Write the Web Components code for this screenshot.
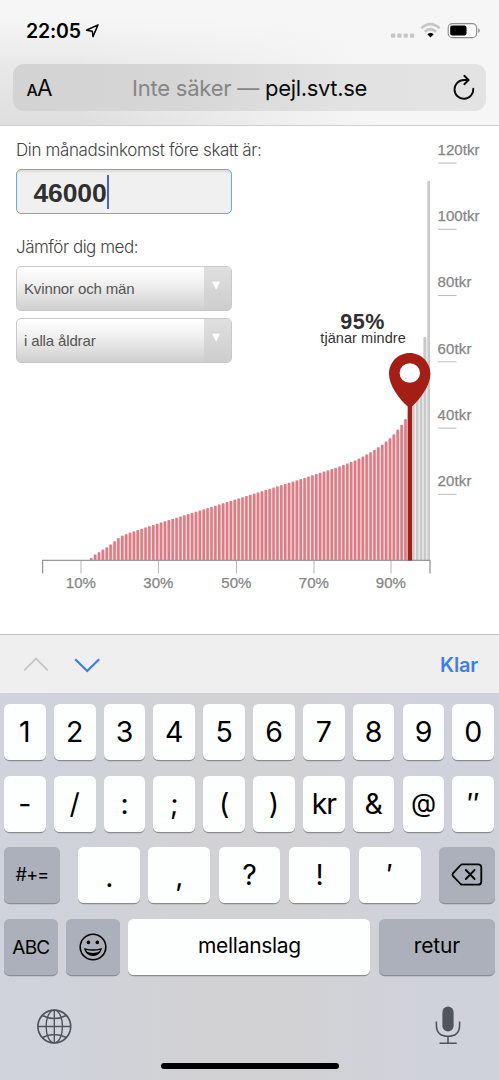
<!DOCTYPE html>
<html lang="sv">
<head>
<meta charset="utf-8">
<title>pejl.svt.se</title>
<style>
html,body{margin:0;padding:0}
body{width:499px;height:1080px;overflow:hidden;background:#fff;font-family:"Inter","Liberation Sans",sans-serif}
</style>
</head>
<body>
<phone-screen></phone-screen>
<script>
const define = (name, html, init) => {
  const t = document.createElement('template');
  t.innerHTML = html;
  customElements.define(name, class extends HTMLElement {
    connectedCallback() {
      if (this.shadowRoot) return;
      this.attachShadow({mode: 'open'}).append(t.content.cloneNode(true));
      if (init) init.call(this, this.shadowRoot);
    }
  });
};

/* Text set to a given width (w) by spreading the difference over its letters. */
define('fit-text', `<style>:host{display:inline-block;white-space:pre}span{display:inline-block;white-space:pre}</style><span><slot></slot></span>`,
function (root) {
  const span = root.querySelector('span');
  const target = parseFloat(this.getAttribute('w'));
  this.style.width = target + 'px';
  const n = this.textContent.length;
  span.style.letterSpacing = (target - span.getBoundingClientRect().width) / n + 'px';
});

define('status-bar', `<style>
:host{display:flex;box-sizing:border-box;height:64px;padding:19px 18px 0 26px;align-items:flex-start;color:#000}
fit-text{font:600 19.5px/24px Inter,sans-serif}
.loc{margin:4px 0 0 4px}
.right{margin-left:auto}
svg{display:block}
</style>
<fit-text w="55">22:05</fit-text>
<svg class="loc" width="15" height="16" viewBox="0 0 15 16"><path d="M1.4 7.3 13 1.9 8 13.6 7.3 8.2Z" fill="none" stroke="#000" stroke-width="1.5" stroke-linejoin="round"/></svg>
<svg class="right" width="92" height="24" viewBox="0 0 92 24">
<g fill="#c6c6c6"><rect x="2" y="14.5" width="4.3" height="4.3" rx="1.3"/><rect x="8.3" y="14.5" width="4.3" height="4.3" rx="1.3"/><rect x="14.6" y="14.5" width="4.3" height="4.3" rx="1.3"/><rect x="20.9" y="14.5" width="4.3" height="4.3" rx="1.3"/></g>
<g fill="none" stroke="#c6c6c6" stroke-width="2.7"><path d="M32.3 9.2Q41.5 .9 50.7 9.2"/><path d="M35.8 12.7Q41.5 7.8 47.2 12.7"/></g>
<path d="M38.3 15.3Q41.5 12.9 44.7 15.3L41.5 18.6Z"/>
<rect x="59.2" y="4.6" width="28.4" height="14" rx="4.2" fill="#fafafa" stroke="#8c8c8c" stroke-width="1.1"/>
<rect x="61.2" y="6.6" width="16.3" height="10" rx="2"/>
<path d="M89.2 9.2q1.6.7 1.6 2.4t-1.6 2.4Z" fill="#8c8c8c"/></svg>`);

define('address-bar', `<style>
:host{display:flex;box-sizing:border-box;align-items:center;height:47px;margin:0 13px;padding:0 10px 0 13.5px;border-radius:11px;background:linear-gradient(90deg,#d3d3d3,#d6d6d6 35%,#e2e2e2 70%,#e3e3e3);color:#0b0b0b}
.aa{display:flex;align-items:baseline;width:105.5px;height:30px;line-height:30px}
.s{font-size:16px;font-weight:500}.b{font-size:22.5px}
.host{font-size:22px;line-height:30px;display:flex}
.g{color:#868686}
svg{margin-left:auto;display:block}
</style>
<div class="aa"><fit-text class="s" w="10.5">A</fit-text><fit-text class="b" w="15">A</fit-text></div>
<div class="host"><fit-text class="g" w="133">Inte säker — </fit-text><fit-text w="102">pejl.svt.se</fit-text></div>
<svg width="24" height="28" viewBox="0 0 24 28"><g fill="none" stroke="#0b0b0b" stroke-width="1.9" stroke-linecap="round" stroke-linejoin="round"><path d="M21.3 14.8A9.4 9.4 0 1 1 11.9 6H16.2"/><path d="M12.3 1.8 16.6 6 12.3 10.2"/></g></svg>`);

define('browser-chrome', `<style>
:host{display:block;box-sizing:border-box;height:126px;border-bottom:1px solid #cfcfcf;background:linear-gradient(90deg,rgba(246,246,246,0) 15%,#f6f6f6 75%),linear-gradient(#f6f6f6 15%,#e9e9e9 50%,#dedede)}
</style><status-bar></status-bar><address-bar></address-bar>`);

define('select-box', `<style>
:host{display:flex;box-sizing:border-box;width:216px;height:45.5px;border:1.5px solid #c9c9c9;border-radius:5px;overflow:hidden;background:linear-gradient(#fff,#f0f0f0 40%,#cfcfcf);color:#555;font:15px/43px "Liberation Sans",sans-serif}
.t{flex:1;padding-left:7px}
.a{width:27.5px;background:linear-gradient(#e0e0e0,#cdcdcd)}
svg{display:block;margin:13px 0 0 6px}
</style><div class="t"><slot></slot></div><div class="a"><svg width="12" height="12" viewBox="0 0 12 12"><path d="M1.2 1.2H11L6.1 10.4Z" fill="#fff" stroke="#c4c4c4" stroke-width=".5"/></svg></div>`);

define('income-form', `<style>
:host{display:block;padding:13px 0 0 16px;color:#444}
.l{font:300 17px/22px Inter,sans-serif;display:block}
.in{display:flex;align-items:center;box-sizing:border-box;width:216px;height:45px;margin:8.4px 0 21.6px;padding-left:16.5px;border:1.3px solid #72a9dc;border-radius:5px;background:#f0f0f0;box-shadow:inset 0 2px 2px #d8dde4;font:bold 26.5px/40px "Liberation Sans",sans-serif;color:#303030}
.in fit-text{position:relative;top:1px}
i{width:2.5px;height:34px;background:#4a61cf}
select-box{margin-top:6.5px}
.first{margin-top:8px}
</style>
<fit-text class="l" w="245.5">Din månadsinkomst före skatt är:</fit-text>
<div class="in"><fit-text w="73">46000</fit-text><i></i></div>
<fit-text class="l" w="122">Jämför dig med:</fit-text>
<select-box class="first"><fit-text w="110.5">Kvinnor och män</fit-text></select-box>
<select-box><fit-text w="71.5">i alla åldrar</fit-text></select-box>`);

define('income-chart', `<style>
:host{display:block}svg{display:block}
text{font:15px "Liberation Sans",sans-serif;fill:#858585;stroke:#858585;stroke-width:.25px}
.d{fill:#333;stroke:none;font-size:14.5px}.b{font:bold 21.5px "Liberation Sans",sans-serif;fill:#303030;stroke:none}
</style><svg width="499" height="508" viewBox="0 126 499 508"><g id="bars"></g><g id="axis"></g>
<g fill="#a41e15"><path d="M409.7 353C421.3 353 430.4 362.3 430.4 373.8C430.4 386 420 399 412 406.5V560.5H407.7V406.5C399.3 399 389 386 389 373.8C389 362.3 398.1 353 409.7 353Z"/><ellipse cx="409.8" cy="373" rx="10.2" ry="9.8" fill="#fff"/></g>
<text class="b" x="340.3" y="328.6" textLength="44">95%</text><text class="d" x="320.3" y="343.3" textLength="85.5">tjänar mindre</text></svg>`,
function (root) {
  const pts = [[90,558],[94,554.3],[98,552],[102,549.3],[106,547],[110,544],[113.5,541],[117.5,537.8],[121,535.7],[129,532.5],[158,523],[197,511],[237,498.6],[263,490.5],[300,479],[313,474.7],[337,467],[355,460],[370,452],[382,444],[389,438],[393,434],[397,429],[401,424],[405,418],[408,410],[412,404],[416,396],[420,380],[424,337],[428,181]];
  const top = x => {
    for (let k = 1; k < pts.length; k++) if (x <= pts[k][0]) {
      const [a, b] = pts[k-1], [c, d] = pts[k];
      return b + (d - b) * (x - a) / (c - a);
    }
    return 181;
  };
  let s = '';
  for (let i = 12; i < 100; i++) {
    const x = 43.4 + 3.88 * i, y = i === 99 ? 181 : i === 98 ? 337 : top(x), grey = i > 94;
    s += `<rect x="${x-.6}" y="${y+1}" width="${i === 99 ? 3 : 3.9}" height="${559-y}" fill="${grey ? '#ececec' : '#f9d3d5'}"/><rect x="${x}" y="${y}" width="2.5" height="${560-y}" fill="${grey ? '#c9c9c9' : '#d97d86'}"/>`;
  }
  root.getElementById('bars').innerHTML = s;
  let a = '<path d="M42.6 573.5V560.3H430V573.5" fill="none" stroke="#999" stroke-width="1.3"/>';
  [[81,10],[158.5,30],[236.5,50],[314,70],[391,90]].forEach(([x, n]) => {
    a += `<path d="M${x} 561V573.5" stroke="#bbb" stroke-width="1.1"/><text x="${x-15.2}" y="588.3" textLength="30">${n}%</text>`;
  });
  for (let n = 20; n <= 120; n += 20) {
    const y = 560.6 - n * 3.313;
    a += `<path d="M438 ${y}H456.5" stroke="#bbb"/><text x="437.5" y="${y-8.2}" textLength="${n > 99 ? 42 : 34}">${n}tkr</text>`;
  }
  root.getElementById('axis').innerHTML = a;
});

define('web-content', `<style>
:host{display:grid;height:508px;background:#fff;overflow:hidden}
income-form,income-chart{grid-area:1/1}
</style><income-chart></income-chart><income-form></income-form>`);

define('input-toolbar', `<style>
:host{display:flex;box-sizing:border-box;height:59px;border-top:1px solid #c0c0c2;background:#efeff0;padding:1px 21px 0 22px;align-items:center}
svg{display:block;margin-right:auto}
fit-text{font:600 20px/28px Inter,sans-serif;color:#3f7de9}
</style><svg width="80" height="24" viewBox="0 0 80 24"><path d="M2.2 17.3 14 5.6 25.8 17.3" fill="none" stroke="#c6c6c8" stroke-width="1.8"/><path d="M53.2 6.2 65.2 18 77.2 6.2" fill="none" stroke="#3f7de9" stroke-width="2.3"/></svg><fit-text w="38">Klar</fit-text>`);

define('key-cap', `<style>
:host{display:flex;box-sizing:border-box;align-items:center;justify-content:center;height:56px;border-radius:5.5px;background:#fdfefe;box-shadow:0 1.2px 0 #8b8c90;color:#000;font:380 28.5px/56px Inter,sans-serif;min-width:0}
:host([dark]){background:#abb0ba}
span{display:flex;white-space:pre}
::slotted(svg){display:block}
</style><span><slot></slot></span>`);

define('ios-keyboard', `<style>
:host{display:block;box-sizing:border-box;height:387px;padding:11px 4px 0;background:linear-gradient(90deg,#d0d3dc 0,#d0d2d9 20%,#d2d2d5 38%,#d2d2d5 60%,#d0d2db 85%)}
.r{display:grid;margin-bottom:15.7px;height:56px}
.ten{grid-template-columns:repeat(10,41.7px);column-gap:8.15px}
.three{grid-template-columns:56px 342.2px 56px;column-gap:18.4px}
.mid{display:grid;grid-template-columns:repeat(5,61.8px);column-gap:8.3px}
.four{grid-template-columns:53.7px 54px 242px 116px;column-gap:8.4px}
.m{font-size:21px;font-weight:400;padding-bottom:3px}
.foot{display:flex;justify-content:space-between;padding:14px 33px 0 31px}
.home{width:178px;height:6.6px;margin:16px auto 0;border-radius:4px;background:#000}
</style>
<div class="r ten"><key-cap>1</key-cap><key-cap>2</key-cap><key-cap>3</key-cap><key-cap>4</key-cap><key-cap>5</key-cap><key-cap>6</key-cap><key-cap>7</key-cap><key-cap>8</key-cap><key-cap>9</key-cap><key-cap>0</key-cap></div>
<div class="r ten"><key-cap>-</key-cap><key-cap>/</key-cap><key-cap>:</key-cap><key-cap>;</key-cap><key-cap>(</key-cap><key-cap>)</key-cap><key-cap><fit-text w="24">kr</fit-text></key-cap><key-cap>&amp;</key-cap><key-cap style="font-size:26px;padding-bottom:2px">@</key-cap><key-cap>″</key-cap></div>
<div class="r three"><key-cap dark style="font-size:18px"><fit-text w="33">#+=</fit-text></key-cap><div class="mid"><key-cap style="padding-top:3px">.</key-cap><key-cap style="padding-top:1px">,</key-cap><key-cap>?</key-cap><key-cap>!</key-cap><key-cap>′</key-cap></div><key-cap dark><svg width="32" height="26" viewBox="0 0 32 26"><g fill="none" stroke="#000" stroke-width="1.8" stroke-linejoin="round" stroke-linecap="round"><path d="M11.2 2.3H27Q30.3 2.3 30.3 5.6V19.4Q30.3 22.7 27 22.7H11.2Q10.3 22.7 9.6 22L1.9 13.8Q1.1 12.7 1.9 11.4L9.6 3.1Q10.3 2.3 11.2 2.3Z"/><path d="M14.8 8 23.6 17M23.6 8 14.8 17"/></g></svg></key-cap></div>
<div class="r four"><key-cap dark style="font-size:19px;padding-top:1px"><fit-text w="37">ABC</fit-text></key-cap><key-cap dark><svg width="30" height="30" viewBox="0 0 30 30"><circle cx="15" cy="15" r="12.8" fill="none" stroke="#000" stroke-width="1.6"/><circle cx="10.5" cy="10.4" r="1.8"/><circle cx="19.3" cy="10.4" r="1.8"/><path d="M6.8 16.8Q15 19.2 23.2 16.8Q21.2 23.3 15 23.3Q8.8 23.3 6.8 16.8Z" fill="none" stroke="#000" stroke-width="1.4" stroke-linejoin="round"/><path d="M8 19.6Q15 22.3 22 19.6Q19.4 23.5 15 23.5Q10.6 23.5 8 19.6Z"/></svg></key-cap><key-cap class="m"><fit-text w="103">mellanslag</fit-text></key-cap><key-cap dark class="m"><fit-text w="46">retur</fit-text></key-cap></div>
<div class="foot"><svg width="38" height="42" viewBox="0 0 38 42"><g fill="none" stroke="#50545c" stroke-width="1.4"><circle cx="23.3" cy="21.5" r="16.4" stroke-width="1.7" transform="translate(-4 0)"/><ellipse cx="19.3" cy="21.5" rx="8.2" ry="16.4"/><path d="M19.3 5V38M3 21.5H35.7M7.3 10.5Q19.3 16.5 31.3 10.5M7.3 32.5Q19.3 26.5 31.3 32.5"/></g></svg>
<svg width="28" height="42" viewBox="0 0 28 42"><rect x="8.4" y="1.5" width="11.2" height="25" rx="5.6" fill="#50545c"/><path d="M2.4 16.5V20Q2.4 31.3 14 31.3T25.6 20V16.5M14 31.3V38.2M5.5 38.2H22.7" fill="none" stroke="#50545c" stroke-width="1.6"/></svg></div>
<div class="home"></div>`);

define('phone-screen', `<style>:host{display:block;width:499px;height:1080px;overflow:hidden}</style>
<browser-chrome></browser-chrome><web-content></web-content><input-toolbar></input-toolbar><ios-keyboard></ios-keyboard>`);
</script>
</body>
</html>
